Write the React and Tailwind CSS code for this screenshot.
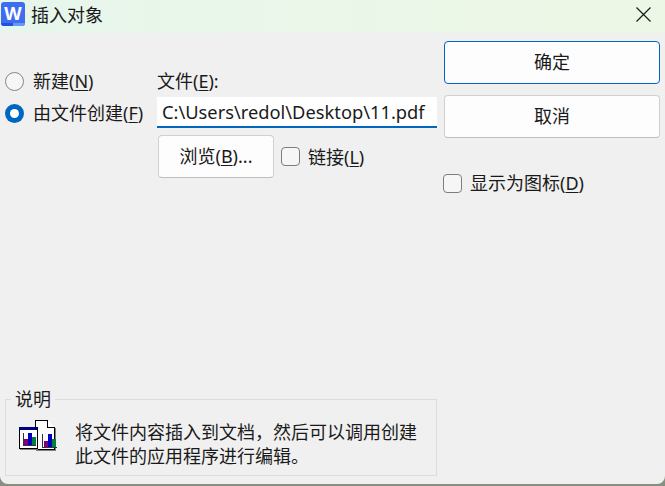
const FONT = "font-['Noto_Sans','Noto_Sans_CJK_SC',sans-serif]";

function Key({ children }) {
  return <span className="underline underline-offset-2 decoration-1">{children}</span>;
}

function Radio({ checked, label }) {
  return (
    <div className="flex items-center h-[22px]">
      {checked ? (
        <span className="w-[19px] h-[19px] rounded-full bg-[#0067c0] flex items-center justify-center shrink-0">
          <span className="w-[9px] h-[9px] rounded-full bg-white" />
        </span>
      ) : (
        <span className="w-[19px] h-[19px] rounded-full border border-[#858585] bg-[#f6f6f6] shrink-0" />
      )}
      <span className="ml-[9px] text-[18px] leading-[22px] whitespace-nowrap">{label}</span>
    </div>
  );
}

function Check({ label }) {
  return (
    <div className="flex items-center">
      <span className="w-[19px] h-[19px] rounded-[4px] border border-[#7d7d7d] bg-[#f6f6f6] shrink-0" />
      <span className="ml-[8px] text-[18px] leading-[22px] whitespace-nowrap">{label}</span>
    </div>
  );
}

function Btn({ children, primary, className }) {
  return (
    <button
      className={
        "bg-[#fdfdfd] rounded-[4px] border text-[18px] text-[#1a1a1a] " +
        (primary ? "border-[#0067c0] " : "border-[#d0d0d0] border-b-[#bdbdbd] ") +
        className
      }
    >
      {children}
    </button>
  );
}

function ObjectIcon() {
  return (
    <svg width="42" height="33" viewBox="0 0 42 33" shapeRendering="crispEdges">
      <path d="M17 1h12l7 7v22H17z" fill="#fff" stroke="#000" />
      <path d="M29 1v7h7" fill="#fff" stroke="#000" />
      <rect x="18" y="31" width="19" height="1" fill="#808080" />
      <rect x="37" y="9" width="1" height="23" fill="#808080" />
      <rect x="24" y="15" width="1" height="14" fill="#333" />
      <rect x="24" y="28" width="15" height="1" fill="#333" />
      <rect x="26" y="22" width="4" height="6" fill="#800080" />
      <rect x="30" y="15" width="4" height="13" fill="#0000c0" />
      <rect x="34" y="20" width="4" height="8" fill="#008040" />
      <rect x="1" y="8" width="18" height="21" fill="#fff" stroke="#000" />
      <rect x="1" y="8" width="18" height="3" fill="#000080" />
      <rect x="5" y="14" width="1" height="13" fill="#333" />
      <rect x="5" y="26" width="13" height="1" fill="#333" />
      <rect x="6" y="20" width="4" height="6" fill="#800080" />
      <rect x="10" y="14" width="4" height="12" fill="#0000c0" />
      <rect x="14" y="18" width="4" height="8" fill="#008040" />
      <rect x="2" y="30" width="18" height="1" fill="#808080" />
    </svg>
  );
}

export default function App() {
  return (
    <div className={"w-[665px] h-[486px] bg-[#87907f] overflow-hidden text-[#1a1a1a] " + FONT}>
      <div className="w-[665px] h-[484px] bg-[#f0f0f0] rounded-b-[8px] flex flex-col overflow-hidden">
        {/* TITLE BAR */}
        <div className="h-[33px] flex items-center shrink-0 bg-gradient-to-r from-[#e7f6ec] to-[#edf7e5]">
          <span className="relative overflow-hidden ml-px -mt-[5px] w-[24px] h-[24px] rounded-[3px] bg-[#3f6df0] flex items-center justify-center text-white text-[18px] leading-none font-bold">
            <span className="-mt-[3px]">W</span>
            <span className="absolute left-0 bottom-0 w-[12px] h-[3px] bg-[#2450e0]" />
            <span className="absolute right-0 bottom-0 w-[12px] h-[3px] bg-[#6a96f6]" />
          </span>
          <span className="ml-[6px] -mt-[3px] text-[18px]">插入对象</span>
          <svg className="ml-auto mr-[14px] -mt-[4px]" width="15" height="15" viewBox="0 0 15 15">
            <path d="M0.5 0.5l14 14M14.5 0.5l-14 14" stroke="#1a1a1a" strokeWidth="1.2" fill="none" />
          </svg>
        </div>

        <div className="flex flex-1 min-h-0">
          {/* LEFT */}
          <div className="w-[444px] flex flex-col pl-[5px] pr-[7px]">
            <div className="flex">
              <div className="w-[152px] pt-[37px] flex flex-col gap-[10px]">
                <Radio label={<>新建(<Key>N</Key>)</>} />
                <Radio checked label={<>由文件创建(<Key>F</Key>)</>} />
              </div>
              <div className="flex-1 pt-[37px]">
                <div className="text-[18px] leading-[22px]">文件(<Key>E</Key>):</div>
                <div className="mt-[5px] h-[31px] bg-white border-b-2 border-[#0067c0] pl-[5px] text-[18.3px] leading-[30px] whitespace-nowrap">
                  C:\Users\redol\Desktop\11.pdf
                </div>
                <div className="flex items-center mt-[7px]">
                  <Btn className="w-[116px] h-[43px] ml-px">浏览(<Key>B</Key>)...</Btn>
                  <div className="ml-[7px]">
                    <Check label={<>链接(<Key>L</Key>)</>} />
                  </div>
                </div>
              </div>
            </div>

            {/* GROUP BOX */}
            <div className="relative mt-auto mb-[8px] h-[77px] border border-[#dcdcdc] flex items-start pl-[12px] pt-[19px]">
              <span className="absolute left-[5px] -top-[12px] px-[4px] bg-[#f0f0f0] text-[18px] leading-[22px]">说明</span>
              <ObjectIcon />
              <p className="ml-[15px] mt-[1px] text-[18px] leading-[24px] w-[345px]">
                将文件内容插入到文档，然后可以调用创建此文件的应用程序进行编辑。
              </p>
            </div>
          </div>

          {/* RIGHT */}
          <div className="flex-1 flex flex-col pt-[8px] pr-[5px]">
            <Btn primary className="h-[43px] w-full">确定</Btn>
            <Btn className="h-[43px] w-full mt-[11px]">取消</Btn>
            <div className="mt-[34px] -ml-px">
              <Check label={<>显示为图标(<Key>D</Key>)</>} />
            </div>
          </div>
        </div>
      </div>
    </div>
  );
}
